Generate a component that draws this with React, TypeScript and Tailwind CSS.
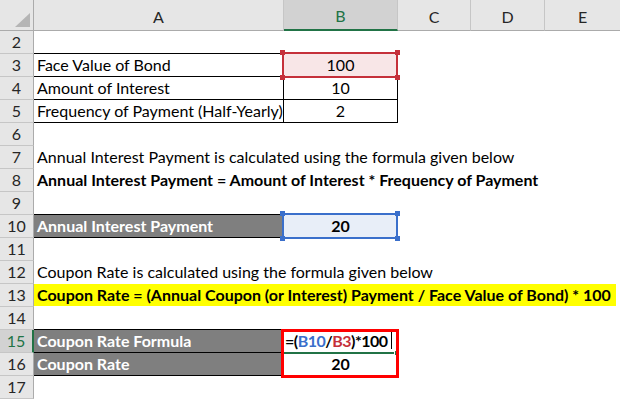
import React from "react";

function RowHead({ n, active }: { n: number; active?: boolean }) {
  return (
    <div
      className={
        active
          ? "w-[34px] shrink-0 h-[23px] box-border border-b border-b-[#c6c6c6] border-r-2 border-r-[#217346] bg-[#d2d2d2] text-[#217346] flex items-center justify-center leading-[22px]"
          : "w-[34px] shrink-0 h-[23px] box-border border-b border-b-[#c6c6c6] border-r border-r-[#ababab] bg-[#e6e6e6] text-[#262626] flex items-center justify-center leading-[22px]"
      }
    >
      {n}
    </div>
  );
}

function Row({ n, active, children }: { n: number; active?: boolean; children?: React.ReactNode }) {
  return (
    <div className="flex h-[23px]">
      <RowHead n={n} active={active} />
      {children}
    </div>
  );
}

function EmptyRest() {
  return (
    <>
      <div className="w-[114px] shrink-0" />
      <div className="w-[73px] shrink-0" />
      <div className="w-[74px] shrink-0" />
      <div className="flex-1" />
    </>
  );
}

function TextRow({ n, text, bold }: { n: number; text: string; bold?: boolean }) {
  return (
    <Row n={n}>
      <div className="w-[250px] shrink-0 h-[23px] box-border border-b border-transparent pl-[3px] leading-[22px] whitespace-nowrap text-black">
        <span className={bold ? "font-bold" : ""}>{text}</span>
      </div>
    </Row>
  );
}

function Sel({ color }: { color: "red" | "blue" }) {
  const red = color === "red";
  return (
    <div
      className={
        red
          ? "absolute -top-[2px] -left-[2px] w-[116px] h-[26px] border-2 border-[#c5303a] z-10 pointer-events-none"
          : "absolute -top-[2px] -left-[2px] w-[116px] h-[26px] border-2 border-[#3a6fcb] z-10 pointer-events-none"
      }
    >
      <div className={red ? "absolute -top-[4px] -left-[4px] w-[5px] h-[5px] bg-[#c5303a]" : "absolute -top-[4px] -left-[4px] w-[5px] h-[5px] bg-[#3a6fcb]"} />
      <div className={red ? "absolute -top-[4px] -right-[4px] w-[5px] h-[5px] bg-[#c5303a]" : "absolute -top-[4px] -right-[4px] w-[5px] h-[5px] bg-[#3a6fcb]"} />
      <div className={red ? "absolute -bottom-[4px] -left-[4px] w-[5px] h-[5px] bg-[#c5303a]" : "absolute -bottom-[4px] -left-[4px] w-[5px] h-[5px] bg-[#3a6fcb]"} />
      <div className={red ? "absolute -bottom-[4px] -right-[4px] w-[5px] h-[5px] bg-[#c5303a]" : "absolute -bottom-[4px] -right-[4px] w-[5px] h-[5px] bg-[#3a6fcb]"} />
    </div>
  );
}

export default function App() {
  return (
    <div className="w-[620px] h-[399px] overflow-hidden bg-white font-['Lato',sans-serif] text-[16px] text-black">
      {/* Column header */}
      <div className="flex h-[31px] text-[#262626]">
        <div className="relative w-[34px] shrink-0 h-[31px] box-border border-b border-r border-[#ababab] bg-[#e6e6e6]">
          <svg className="absolute left-[15px] top-[13px]" width="15" height="14" viewBox="0 0 15 14">
            <polygon points="15,0 15,14 0,14" fill="#b5b5b5" />
          </svg>
        </div>
        <div className="w-[250px] shrink-0 h-[31px] box-border border-b border-b-[#ababab] border-r border-r-[#c6c6c6] bg-[#e6e6e6] flex items-center justify-center pt-[3px]">A</div>
        <div className="w-[114px] shrink-0 h-[31px] box-border border-b-2 border-b-[#217346] border-r border-r-[#c6c6c6] bg-[#d2d2d2] text-[#217346] flex items-center justify-center pt-[3px]">B</div>
        <div className="w-[73px] shrink-0 h-[31px] box-border border-b border-b-[#ababab] border-r border-r-[#c6c6c6] bg-[#e6e6e6] flex items-center justify-center pt-[3px]">C</div>
        <div className="w-[74px] shrink-0 h-[31px] box-border border-b border-b-[#ababab] border-r border-r-[#c6c6c6] bg-[#e6e6e6] flex items-center justify-center pt-[3px]">D</div>
        <div className="flex-1 h-[31px] box-border border-b border-b-[#ababab] bg-[#e6e6e6] flex items-center justify-center pt-[3px]">E</div>
      </div>

      {/* Row 2 */}
      <Row n={2}>
        <div className="w-[250px] shrink-0 h-[23px] box-border border-b border-black" />
        <EmptyRest />
      </Row>

      {/* Rows 3-5 table */}
      <Row n={3}>
        <div className="w-[250px] shrink-0 h-[23px] box-border border-b border-r border-black pl-[3px] leading-[22px] whitespace-nowrap">Face Value of Bond</div>
        <div className="relative w-[114px] shrink-0 h-[23px] box-border border-b border-r border-black bg-[#f8e6e7] text-center leading-[22px]">
          100
          <Sel color="red" />
        </div>
      </Row>
      <Row n={4}>
        <div className="w-[250px] shrink-0 h-[23px] box-border border-b border-r border-black pl-[3px] leading-[22px] whitespace-nowrap">Amount of Interest</div>
        <div className="w-[114px] shrink-0 h-[23px] box-border border-b border-r border-black text-center leading-[22px]">10</div>
      </Row>
      <Row n={5}>
        <div className="w-[250px] shrink-0 h-[23px] box-border border-b border-r border-black pl-[3px] leading-[22px] whitespace-nowrap">Frequency of Payment (Half-Yearly)</div>
        <div className="w-[114px] shrink-0 h-[23px] box-border border-b border-r border-black text-center leading-[22px]">2</div>
      </Row>

      <Row n={6} />
      <TextRow n={7} text="Annual Interest Payment is calculated using the formula given below" />
      <TextRow n={8} text="Annual Interest Payment = Amount of Interest * Frequency of Payment" bold />

      <Row n={9}>
        <div className="w-[250px] shrink-0 h-[23px] box-border border-b border-black" />
      </Row>

      <Row n={10}>
        <div className="w-[250px] shrink-0 h-[23px] box-border border-b border-r border-black bg-[#7f7f7f] bg-clip-padding pl-[3px] leading-[22px] whitespace-nowrap font-bold text-white">Annual Interest Payment</div>
        <div className="relative w-[114px] shrink-0 h-[23px] box-border border-b border-r border-transparent bg-[#e8eef8] text-center leading-[22px] font-bold">
          20
          <Sel color="blue" />
        </div>
      </Row>

      <Row n={11} />
      <TextRow n={12} text="Coupon Rate is calculated using the formula given below" />

      <Row n={13}>
        <div className="w-[582px] shrink-0 h-[23px] box-border border-b border-transparent bg-[#ffff00] bg-clip-padding pl-[3px] leading-[22px] whitespace-nowrap font-bold">
          Coupon Rate = (Annual Coupon (or Interest) Payment / Face Value of Bond) * 100
        </div>
      </Row>

      <Row n={14}>
        <div className="w-[250px] shrink-0 h-[23px] box-border border-b border-black" />
      </Row>

      <Row n={15} active>
        <div className="w-[250px] shrink-0 h-[23px] box-border border-b border-r border-black bg-[#7f7f7f] bg-clip-padding pl-[3px] leading-[22px] whitespace-nowrap font-bold text-white">Coupon Rate Formula</div>
        <div className="relative w-[114px] shrink-0 h-[23px] box-border border-b border-r border-transparent pl-[1px] leading-[22px] whitespace-nowrap font-bold tracking-[-0.5px]">
          <span>=(</span>
          <span className="text-[#3a6fcb]">B10</span>
          <span>/</span>
          <span className="text-[#c5303a]">B3</span>
          <span>)*100</span>
          <div className="absolute left-[107px] top-[2px] w-[1px] h-[17px] bg-black" />
          <div className="absolute left-0 top-[22px] w-[110px] h-[2px] bg-[#217346]" />
          <div className="absolute left-[111px] top-[21px] w-[3px] h-[4px] bg-[#217346]" />
          <div className="absolute -top-[1px] -left-[3px] w-[118px] h-[49px] border-[3px] border-[#ff0000] z-10 pointer-events-none" />
        </div>
      </Row>

      <Row n={16}>
        <div className="w-[250px] shrink-0 h-[23px] box-border border-b border-r border-black bg-[#7f7f7f] bg-clip-padding pl-[3px] leading-[22px] whitespace-nowrap font-bold text-white">Coupon Rate</div>
        <div className="w-[114px] shrink-0 h-[23px] box-border border-b border-r border-transparent text-center leading-[22px] font-bold">20</div>
      </Row>

      <Row n={17} />
    </div>
  );
}
